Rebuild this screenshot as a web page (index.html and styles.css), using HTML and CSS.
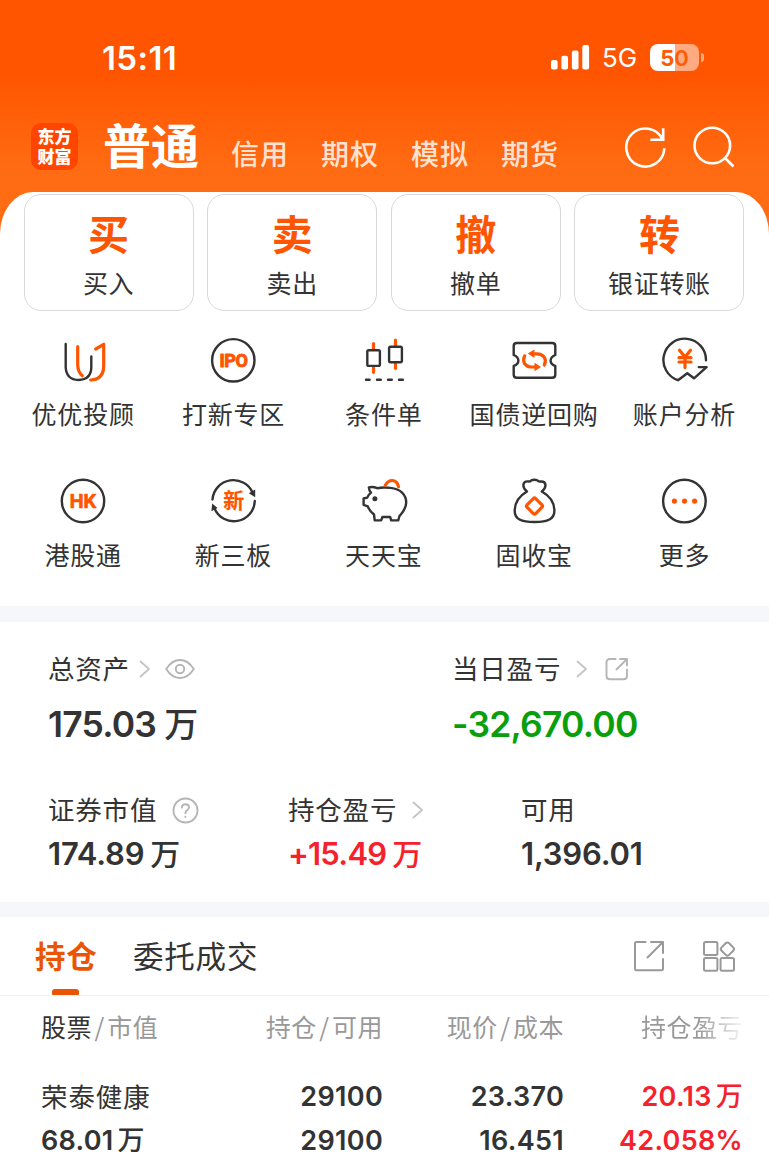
FILE: index.html
```html
<!DOCTYPE html>
<html lang="zh-CN">
<head>
    <meta charset="UTF-8">
    <meta name="viewport" content="width=device-width, initial-scale=1.0">
    <title>东方财富 - 普通交易</title>
    <link rel="stylesheet" href="styles.css">
</head>
<body>
    <header class="header">
        <div class="status-bar">
            <span class="time">15:11</span>
            <svg class="signal" width="39" height="25" viewBox="0 0 39 25" fill="#fff">
                <rect x="0" y="15" width="6.6" height="9.4" rx="2"/>
                <rect x="10.4" y="10.8" width="6.6" height="13.6" rx="2"/>
                <rect x="20.9" y="5.4" width="6.6" height="19" rx="2"/>
                <rect x="31.3" y="0" width="6.8" height="24.4" rx="2"/>
            </svg>
            <span class="network">5G</span>
            <div class="battery"><span>5</span><span class="dim">0</span></div>
            <i class="battery-cap"></i>
        </div>

        <nav class="account-nav">
            <div class="logo">东方<br>财富</div>
            <a class="account active">普通</a>
            <a class="account">信用</a>
            <a class="account">期权</a>
            <a class="account">模拟</a>
            <a class="account">期货</a>
            <svg class="nav-icon refresh" width="44" height="44" viewBox="0 0 44 44">
                <path d="M41.3 23.2A19 19 0 1 1 39.6 14.6M40.2 3.2V14.7H27.4"/>
            </svg>
            <svg class="nav-icon search" width="44" height="44" viewBox="0 0 44 44">
                <circle cx="20.3" cy="20.5" r="17.8"/>
                <path d="M33 33L41.5 41.5"/>
            </svg>
        </nav>
    </header>

    <main class="panel">
        <section class="trade-actions">
            <a class="trade-card"><strong>买</strong><span>买入</span></a>
            <a class="trade-card"><strong>卖</strong><span>卖出</span></a>
            <a class="trade-card"><strong>撤</strong><span>撤单</span></a>
            <a class="trade-card"><strong>转</strong><span>银证转账</span></a>
        </section>

        <section class="shortcuts">
            <a class="shortcut">
                <svg viewBox="0 0 48 48">
                    <path class="dark" d="M6.7 8V31.5Q7.5 43.8 19.5 44Q32.3 43.5 32.3 31V20.5"/>
                    <path class="orange" d="M18.7 10.7V29Q18.9 36 23.3 39.7M36.7 13L44.7 8.3V30Q44.5 43.5 31.7 44"/>
                </svg>
                <span>优优投顾</span>
            </a>
            <a class="shortcut">
                <svg viewBox="0 0 48 48">
                    <circle class="dark" cx="24.3" cy="24.3" r="21.2"/>
                    <text class="icon-text ipo" x="10.4" y="30.8" textLength="28.6" lengthAdjust="spacing">IPO</text>
                </svg>
                <span>打新专区</span>
            </a>
            <a class="shortcut">
                <svg viewBox="0 0 48 48">
                    <path class="orange" d="M13.5 7.5V13M13.5 31V36.3M35.5 4.2V10M35.5 27V32.3"/>
                    <rect class="dark" x="7.3" y="14.3" width="12.6" height="15.6" rx="1.5"/>
                    <rect class="dark" x="29.1" y="10.7" width="12.8" height="15.6" rx="1.5"/>
                    <path class="dark" d="M6 43.7H9.6M17 43.7H20.8M28 43.7H31.8M39 43.7H42.9"/>
                </svg>
                <span>条件单</span>
            </a>
            <a class="shortcut">
                <svg viewBox="0 0 48 48">
                    <path class="dark" d="M6.8 7H42.2Q45.3 7 45.3 10V19Q40.6 21 40.6 24.6Q40.6 28.6 45.3 30V38.7Q45.3 41.7 42.2 41.7H6.8Q3.7 41.7 3.7 38.7V30Q8.4 28.6 8.4 24.6Q8.4 21 3.7 19V10Q3.7 7 6.8 7Z"/>
                    <path class="orange" d="M14.6 19.8Q12.8 24 14.5 27.5Q17 31 22 31H26.5M34.3 29Q36.4 24.7 34.3 21.2Q31.7 17.8 27 17.8H22.5"/>
                    <path class="orange-fill" d="M24.5 26.8L31 31L24.5 35.3ZM24.5 13.4L17.8 17.6L24.5 22Z"/>
                </svg>
                <span>国债逆回购</span>
            </a>
            <a class="shortcut">
                <svg viewBox="0 0 48 48">
                    <path class="dark" d="M46 24.2A21.3 21.3 0 1 0 18 44.2L27.3 37.2L34 42.3L46.6 31.1H38.8"/>
                    <path class="orange" d="M19.5 14.2L25 21L30.5 14.2M19 21.7H31M19 26H31M25 21V31.6"/>
                </svg>
                <span>账户分析</span>
            </a>
            <a class="shortcut">
                <svg viewBox="0 0 48 48">
                    <circle class="dark" cx="24" cy="24" r="21.2"/>
                    <text class="icon-text" x="10.8" y="31" textLength="27" lengthAdjust="spacingAndGlyphs">HK</text>
                </svg>
                <span>港股通</span>
            </a>
            <a class="shortcut">
                <svg viewBox="0 0 48 48">
                    <path class="dark" d="M3.5 22.5A21 21 0 0 1 43.8 16M45.8 24A21 21 0 0 1 5.5 31.5"/>
                    <path class="dark-fill" d="M39.8 16.3L46.2 12.6L46.2 20.2ZM2.4 34.2L3.2 26.4L8.6 31Z"/>
                    <text class="icon-text cjk" x="14.2" y="31.4">新</text>
                </svg>
                <span>新三板</span>
            </a>
            <a class="shortcut">
                <svg viewBox="0 0 48 48">
                    <path class="dark" d="M8.8 10.3Q13 9.4 17.2 11.2Q23 10 30.5 10.9C41 12 46.2 18 46.2 25.5C46.2 32 42.5 35.5 39.5 39L38.2 43.4H31.2L30.2 40H22.4L21.2 43.4H14.7L14 37.5Q9.6 34.2 7.8 29.4L3.6 27.8V21.5L7.2 20.6Q8.4 17.5 11 15.6Q9 13.5 8.8 10.3Z"/>
                    <circle class="dark-fill" cx="14.9" cy="21.7" r="2.5"/>
                    <path class="orange" d="M25.3 8.3Q28 3.3 32.5 3.5Q37.5 4 38.5 9.7"/>
                </svg>
                <span>天天宝</span>
            </a>
            <a class="shortcut">
                <svg viewBox="0 0 48 48">
                    <path class="dark" d="M17 14.5Q13 11.5 13.4 7.5Q14.2 3.8 18.8 4.5Q20.5 4.8 21 3.5Q24.3 1.9 27.7 3.5Q28.3 4.8 30 4.5Q35 3.9 35.5 7.8Q35.6 11.5 31.8 14.5C39 18.5 44.4 25.5 44.4 33.7C44.4 42 38 45 24.5 45C11 45 4.7 42 4.7 34C4.7 25.5 10 18.5 17 14.5Z"/>
                    <rect class="orange" x="18.4" y="23" width="12.2" height="12.2" rx="1.6" transform="rotate(45 24.5 29.1)"/>
                </svg>
                <span>固收宝</span>
            </a>
            <a class="shortcut">
                <svg viewBox="0 0 48 48">
                    <circle class="dark" cx="24.4" cy="24.1" r="21.3"/>
                    <g class="orange-fill">
                        <circle cx="14.4" cy="24.1" r="2.6"/>
                        <circle cx="24.5" cy="24.1" r="2.6"/>
                        <circle cx="34.6" cy="24.1" r="2.6"/>
                    </g>
                </svg>
                <span>更多</span>
            </a>
        </section>

        <section class="assets">
            <div class="asset-row main-row">
                <div class="asset">
                    <div class="asset-label"><span>总资产</span>
                        <svg class="chevron" width="12" height="18" viewBox="0 0 12 18"><path d="M1.5 1.5L10 9L1.5 16.5"/></svg>
                        <svg class="line-icon eye" width="30" height="22" viewBox="0 0 30 22">
                            <path d="M1.2 11Q7 2 15 2Q23 2 28.8 11Q23 20 15 20Q7 20 1.2 11Z"/>
                            <circle cx="15" cy="11" r="4.2"/>
                        </svg>
                    </div>
                    <div class="asset-value">175.03<em>万</em></div>
                </div>
                <div class="asset">
                    <div class="asset-label"><span>当日盈亏</span>
                        <svg class="chevron wide" width="12" height="18" viewBox="0 0 12 18"><path d="M1.5 1.5L10 9L1.5 16.5"/></svg>
                        <svg class="line-icon share" width="24" height="24" viewBox="0 0 24 24">
                            <path d="M10.5 2H5Q1.5 2 1.5 5.5V19Q1.5 22.3 5 22.3H18.5Q22 22.3 22 19V12.5M15 2H22V8.5M22 2L11.5 12.5"/>
                        </svg>
                    </div>
                    <div class="asset-value down">-32,670.00</div>
                </div>
            </div>
            <div class="asset-row sub-row">
                <div class="asset">
                    <div class="asset-label"><span>证券市值</span>
                        <svg class="line-icon help" width="27" height="27" viewBox="0 0 27 27">
                            <circle cx="13.5" cy="13.5" r="12"/>
                            <path d="M9.9 10.6Q10 7.2 13.5 7.2Q17 7.2 17 10.3Q17 12.2 15 13.3Q13.4 14.3 13.4 16.3M13.4 19.6V19.9"/>
                        </svg>
                    </div>
                    <div class="asset-value">174.89<em>万</em></div>
                </div>
                <div class="asset">
                    <div class="asset-label"><span>持仓盈亏</span>
                        <svg class="chevron wide" width="12" height="18" viewBox="0 0 12 18"><path d="M1.5 1.5L10 9L1.5 16.5"/></svg>
                    </div>
                    <div class="asset-value up">+15.49<em>万</em></div>
                </div>
                <div class="asset">
                    <div class="asset-label"><span>可用</span></div>
                    <div class="asset-value">1,396.01</div>
                </div>
            </div>
        </section>

        <section class="positions">
            <div class="tabs">
                <a class="tab active">持仓</a>
                <a class="tab">委托成交</a>
                <svg class="tab-icon" width="32" height="32" viewBox="0 0 32 32">
                    <path d="M12.5 2H3.5Q2 2 2 3.5V29Q2 30.3 3.5 30.3H28.5Q30 30.3 30 29V19M18 2H30V13M30 2L14.5 17.5"/>
                </svg>
                <svg class="tab-icon" width="34" height="32" viewBox="0 0 34 32">
                    <rect x="2" y="2" width="13.4" height="13" rx="1.5"/>
                    <rect x="2" y="18" width="13.4" height="12.8" rx="1.5"/>
                    <rect x="18.6" y="18" width="13.4" height="12.8" rx="1.5"/>
                    <rect x="20.1" y="3.8" width="10.6" height="10.6" rx="2.4" transform="rotate(45 25.4 9.1)"/>
                </svg>
            </div>

            <div class="table">
                <div class="table-head">
                    <span><b>股票</b><i>/</i>市值</span>
                    <span>持仓<i>/</i>可用</span>
                    <span>现价<i>/</i>成本</span>
                    <span class="fade">持仓盈亏</span>
                </div>
                <div class="table-row">
                    <span class="name">荣泰健康</span>
                    <span>29100</span>
                    <span>23.370</span>
                    <span class="up">20.13<em>万</em></span>
                    <span class="worth">68.01<em>万</em></span>
                    <span>29100</span>
                    <span>16.451</span>
                    <span class="up">42.058%</span>
                </div>
            </div>
        </section>
    </main>
</body>
</html>
```

FILE: styles.css
```css
* {
    margin: 0;
    padding: 0;
    box-sizing: border-box;
}

body {
    height: 1166px;
    overflow: hidden;
    font-family: Inter, 'Noto Sans CJK SC', sans-serif;
    color: #333;
    background: linear-gradient(180deg, #ff5500 0, #ff5500 75px, #ff6b12 165px, #ff6e14 240px);
}

i,
em {
    font-style: normal;
}

svg {
    display: block;
    flex-shrink: 0;
    fill: none;
    stroke-linecap: round;
    stroke-linejoin: round;
}

/* Header */
.header {
    height: 192px;
    color: #fff;
}

.status-bar {
    display: flex;
    align-items: center;
    height: 115px;
    padding-left: 102px;
}

.time {
    width: 449px;
    font-size: 33px;
    font-weight: 600;
    letter-spacing: 0.4px;
    line-height: 40px;
}

.signal {
    fill: #fff;
}

.network {
    width: 48px;
    margin-left: 12px;
    font-size: 26px;
    line-height: 32px;
    padding-top: 1px;
}

.battery {
    width: 49px;
    height: 27px;
    border-radius: 8px;
    background: linear-gradient(90deg, #fff 50%, rgba(255, 255, 255, 0.5) 50%);
    color: #ff5a05;
    font-size: 22px;
    font-weight: 700;
    line-height: 28px;
    text-align: center;
}

.battery .dim {
    font-weight: 600;
}

.battery-cap {
    width: 3px;
    height: 9px;
    margin-left: 2px;
    border-radius: 0 4px 4px 0;
    background: rgba(255, 255, 255, 0.5);
}

.account-nav {
    display: flex;
    align-items: center;
    height: 63px;
    padding-left: 31px;
}

.logo {
    width: 47px;
    height: 47px;
    margin-right: 25px;
    padding-top: 4px;
    border-radius: 10px;
    background: #ff4500;
    font-size: 17px;
    font-weight: 900;
    line-height: 20px;
    text-align: center;
}

.account {
    width: 90px;
    padding-top: 17px;
    color: rgba(255, 255, 255, 0.82);
    font-size: 28px;
    font-weight: 500;
    letter-spacing: 1px;
    line-height: 32px;
}

.account.active {
    width: 128px;
    padding-top: 1px;
    color: #fff;
    font-size: 48px;
    font-weight: 700;
    letter-spacing: 0;
    line-height: 60px;
}

.nav-icon {
    stroke: #fff;
    stroke-width: 2.6;
    stroke-linecap: butt;
    stroke-linejoin: miter;
}

.refresh {
    margin-left: 32px;
}

.search {
    margin-left: 25px;
}

/* White content sheet */
.panel {
    height: 974px;
    border-radius: 33px 33px 0 0 / 42px 42px 0 0;
    background: #fff;
}

.trade-actions {
    display: grid;
    grid-template-columns: repeat(4, 1fr);
    gap: 13.6px;
    padding: 2px 24.6px 0 23.6px;
}

.trade-card {
    display: flex;
    flex-direction: column;
    align-items: center;
    height: 117px;
    padding-top: 15px;
    border: 1px solid #d9d9d9;
    border-radius: 17px;
}

.trade-card strong {
    color: #ff5500;
    font-size: 41px;
    line-height: 50px;
}

.trade-card span {
    font-size: 25px;
    letter-spacing: 0.7px;
    line-height: 32px;
    margin-top: 8px;
}

.shortcuts {
    display: grid;
    grid-template-columns: repeat(5, 1fr);
    grid-auto-rows: 141px;
    height: 295px;
    padding: 25px 9.4px 0 8px;
}

.shortcut {
    display: flex;
    flex-direction: column;
    align-items: center;
    gap: 14px;
    font-size: 25px;
    letter-spacing: 0.8px;
    line-height: 34px;
    white-space: nowrap;
}

.shortcut svg {
    width: 48px;
    height: 48px;
    stroke-width: 2.4;
}

.dark {
    stroke: #333;
}

.orange {
    stroke: #ff5500;
    stroke-width: 3.2;
}

.dark-fill {
    fill: #333;
}

.orange-fill {
    fill: #ff5500;
}

.icon-text {
    fill: #ff5500;
    stroke: #ff5500;
    stroke-width: 0.7;
    font-size: 18.5px;
    font-weight: 700;
    letter-spacing: 0;
}

.icon-text.ipo {
    stroke-width: 0.9;
    font-family: Roboto, sans-serif;
    font-size: 18px;
}

.icon-text.cjk {
    stroke-width: 0.2;
    font-size: 21px;
}

/* Assets */
.assets {
    height: 311px;
    border-top: 16px solid #f5f7fa;
    border-bottom: 15px solid #f5f7fa;
    padding: 27px 48px 0;
}

.asset-row {
    display: grid;
}

.main-row {
    grid-template-columns: 404px 1fr;
    height: 141px;
}

.sub-row {
    grid-template-columns: 240px 233px 1fr;
}

.asset-label {
    display: flex;
    align-items: center;
    height: 40px;
    font-size: 26.5px;
    letter-spacing: 0.8px;
}

.asset-label span {
    height: 40px;
    line-height: 41px;
}

.asset-value {
    margin-top: 14px;
    font-size: 35.5px;
    font-weight: 600;
    letter-spacing: -0.8px;
    line-height: 44px;
}

.asset-value em {
    margin-left: 8px;
    font-size: 34px;
    font-weight: 500;
}

.sub-row .asset-value {
    margin-top: 2px;
    font-size: 31px;
    letter-spacing: -0.2px;
}

.sub-row .asset-value em {
    margin-left: 6px;
    font-size: 30px;
}

.up {
    color: #f5222d;
}

.sub-row .asset-value.up {
    letter-spacing: -0.8px;
}

.down {
    color: #0a9f0a;
}

.chevron {
    margin-left: 9px;
    stroke: #c4c4c4;
    stroke-width: 1.8;
}

.chevron.wide {
    margin-left: 15px;
}

.line-icon {
    stroke: #b5b5b5;
    stroke-width: 1.9;
}

.eye {
    margin-left: 14px;
}

.share {
    margin-left: 17px;
}

.help {
    margin-left: 15px;
}

/* Positions */
.tabs {
    display: flex;
    align-items: center;
    height: 79px;
    padding: 0 33px 0 35px;
    border-bottom: 1px solid #f0f1f3;
}

.tab {
    height: 78px;
    font-size: 30.5px;
    letter-spacing: 0.8px;
    line-height: 79px;
}

.tab.active {
    position: relative;
    width: 98px;
    color: #ea5504;
    font-weight: 600;
}

.tab.active::after {
    content: '';
    position: absolute;
    left: 17px;
    bottom: 0;
    width: 27px;
    height: 6px;
    border-radius: 3px 3px 1px 1px;
    background: #ea5504;
}

.tab-icon {
    margin-left: 37px;
    stroke: #999;
    stroke-width: 2;
}

.tab + .tab-icon {
    margin-left: auto;
}

.table {
    padding: 0 26px 0 41px;
}

.table-head,
.table-row {
    display: grid;
    grid-template-columns: 161px 181px 181px 1fr;
    text-align: right;
}

.table-head {
    height: 79px;
    color: #999;
    font-family: 'Noto Sans CJK SC', sans-serif;
    font-size: 25px;
    letter-spacing: 0.5px;
    line-height: 61px;
}

.table-head b {
    color: #333;
    font-weight: 400;
}

.table-head i {
    margin: 0 2.5px;
}

.table-head span:first-child,
.name,
.worth {
    text-align: left;
}

.fade {
    background: linear-gradient(90deg, #999 75%, rgba(153, 153, 153, 0.1) 100%);
    -webkit-background-clip: text;
    background-clip: text;
    color: transparent;
}

.table-row {
    font-size: 27px;
    font-weight: 600;
    letter-spacing: 0.3px;
    line-height: 44px;
}

.table-row em {
    margin-left: 4px;
    font-weight: 500;
}

.table-row .name {
    font-size: 26.5px;
    font-weight: 400;
    letter-spacing: 0.9px;
}
```
